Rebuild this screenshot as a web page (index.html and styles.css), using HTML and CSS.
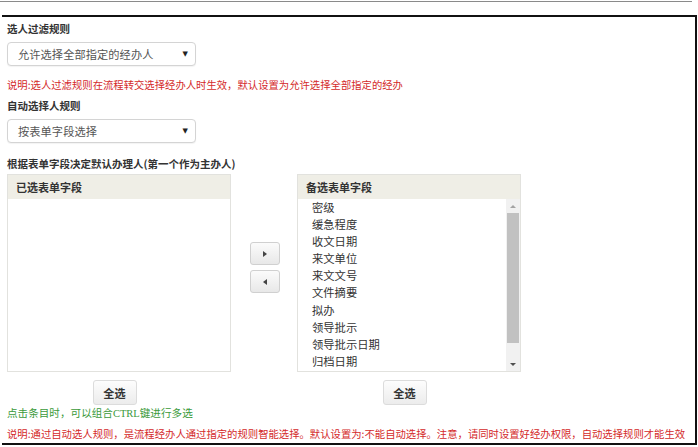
FILE: index.html
```html
<!DOCTYPE html>
<html lang="zh-CN">
<head>
<meta charset="utf-8">
<title>选人规则</title>
<link rel="stylesheet" href="styles.css">
</head>
<body>
<div class="topline"></div>
<div class="panel">
  <div class="label first">选人过滤规则</div>
  <div class="select"><span class="sel-text">允许选择全部指定的经办人</span><span class="sel-arrow">▼</span></div>
  <div class="note red n1">说明:选人过滤规则在流程转交选择经办人时生效，默认设置为允许选择全部指定的经办</div>
  <div class="label l2">自动选择人规则</div>
  <div class="select"><span class="sel-text">按表单字段选择</span><span class="sel-arrow">▼</span></div>
  <div class="label l3">根据表单字段决定默认办理人(第一个作为主办人)</div>

  <div class="transfer">
    <div class="col">
      <div class="box left">
        <div class="box-head">已选表单字段</div>
        <div class="box-body"></div>
      </div>
      <div class="btn-row"><button class="btn">全选</button></div>
    </div>
    <div class="mid">
      <button class="arrow-btn"><span class="tri tri-r"></span></button>
      <button class="arrow-btn"><span class="tri tri-l"></span></button>
    </div>
    <div class="col">
      <div class="box right">
        <div class="box-head">备选表单字段</div>
        <div class="box-body list-wrap">
          <ul class="list">
            <li>密级</li>
            <li>缓急程度</li>
            <li>收文日期</li>
            <li>来文单位</li>
            <li>来文文号</li>
            <li>文件摘要</li>
            <li>拟办</li>
            <li>领导批示</li>
            <li>领导批示日期</li>
            <li>归档日期</li>
          </ul>
          <div class="scrollbar">
            <div class="sb-btn"><span class="sb-up"></span></div>
            <div class="sb-track"><div class="sb-thumb"></div></div>
            <div class="sb-btn"><span class="sb-down"></span></div>
          </div>
        </div>
      </div>
      <div class="btn-row"><button class="btn">全选</button></div>
    </div>
  </div>

  <div class="note green">点击条目时，可以组合<span class="latin">CTRL</span>键进行多选</div>
  <div class="note red n2">说明:通过自动选人规则，是流程经办人通过指定的规则智能选择。默认设置为:不能自动选择。注意，请同时设置好经办权限，自动选择规则才能生效</div>
</div>
</body>
</html>
```

FILE: styles.css
```css
* { box-sizing: border-box; }
html, body { margin: 0; padding: 0; background: #fff; }
body {
  font-family: "Noto Sans CJK SC", "Liberation Sans", sans-serif;
  color: #333;
  width: 698px;
  height: 447px;
  overflow: hidden;
}
.topline {
  height: 1px;
  margin-top: 1px;
  width: 692px;
  background: #8a8a8a;
}
.panel {
  margin-top: 13px;
  margin-left: 2px;
  width: 695px;
  height: 430px;
  border-top: 2px solid #111;
  border-right: 2px solid #111;
  border-bottom: 2px solid #111;
  padding: 4px 0 0 5px;
  overflow: hidden;
}
.label {
  font-size: 10.5px;
  line-height: 16px;
  font-weight: bold;
  color: #333;
  white-space: nowrap;
}
.l2 { margin-top: 5px; }
.l3 { margin-top: 13px; }
.select {
  margin-top: 5px;
  width: 189px;
  height: 24px;
  border: 1px solid #d4d4d4;
  border-radius: 4px;
  box-shadow: 0 1px 1px rgba(0,0,0,0.05);
  display: flex;
  align-items: center;
  justify-content: space-between;
  padding: 0 7px 0 10px;
  background: #fff;
}
.sel-text {
  font-size: 11.2px;
  color: #555;
  letter-spacing: 0.1px;
}
.sel-arrow {
  font-size: 7px;
  color: #222;
  font-family: "DejaVu Sans", sans-serif;
}
.note {
  line-height: 16px;
  white-space: nowrap;
}
.red { color: #d42a2a; font-size: 10.35px; }
.n1 { margin-top: 11px; }
.n2 { margin-top: 4px; }
.green { color: #3b9a3b; font-size: 10.6px; }
.latin { font-family: "Liberation Serif", serif; font-size: 10.5px; }

.transfer {
  margin-top: 2px;
  display: flex;
  align-items: flex-start;
}
.col {
  display: flex;
  flex-direction: column;
}
.box {
  height: 198px;
  border: 1px solid #e2e2de;
  display: flex;
  flex-direction: column;
}
.box.left { width: 224px; }
.box.right { width: 224px; }
.box-head {
  height: 24px;
  flex: none;
  background: #efeee6;
  font-size: 11px;
  font-weight: bold;
  color: #333;
  line-height: 24px;
  padding-left: 8px;
}
.box-body {
  flex: 1;
  background: #fff;
}
.list-wrap {
  display: flex;
  min-height: 0;
}
.list {
  list-style: none;
  margin: 0;
  padding: 0 0 0 14px;
  flex: 1;
  overflow: hidden;
}
.list li {
  font-size: 11.3px;
  line-height: 17.1px;
  height: 17.1px;
  color: #333;
  white-space: nowrap;
}
.scrollbar {
  width: 14px;
  flex: none;
  display: flex;
  flex-direction: column;
  background: #f1f1f1;
}
.sb-btn {
  height: 14px;
  flex: none;
  display: flex;
  align-items: center;
  justify-content: center;
}
.sb-up {
  width: 0; height: 0;
  border-left: 3px solid transparent;
  border-right: 3px solid transparent;
  border-bottom: 3px solid #a3a3a3;
}
.sb-down {
  width: 0; height: 0;
  border-left: 3.5px solid transparent;
  border-right: 3.5px solid transparent;
  border-top: 3.5px solid #505050;
}
.sb-track {
  flex: 1;
  padding: 0 1px;
}
.sb-thumb {
  height: 130px;
  background: #c1c1c1;
}
.mid {
  width: 66px;
  flex: none;
  display: flex;
  flex-direction: column;
  align-items: center;
  padding-top: 68px;
  padding-left: 1px;
  gap: 5px;
}
.arrow-btn {
  width: 30px;
  height: 23px;
  padding: 0;
  border: 1px solid #d0d0d0;
  border-radius: 3px;
  background: linear-gradient(#fbfbfb, #e8e8e8);
  display: flex;
  align-items: center;
  justify-content: center;
}
.tri { width: 0; height: 0; }
.tri-r {
  border-top: 3.5px solid transparent;
  border-bottom: 3.5px solid transparent;
  border-left: 4px solid #444;
}
.tri-l {
  border-top: 3.5px solid transparent;
  border-bottom: 3.5px solid transparent;
  border-right: 4px solid #444;
}
.btn-row {
  display: flex;
  justify-content: center;
  padding-right: 9px;
  margin-top: 8px;
}
.btn {
  width: 44px;
  height: 25px;
  padding: 0;
  border: 1px solid #dcdcdc;
  border-radius: 3px;
  background: linear-gradient(#fdfdfd, #ececec);
  font-family: "Noto Sans CJK SC", sans-serif;
  font-size: 11.2px;
  font-weight: bold;
  color: #333;
}
```
